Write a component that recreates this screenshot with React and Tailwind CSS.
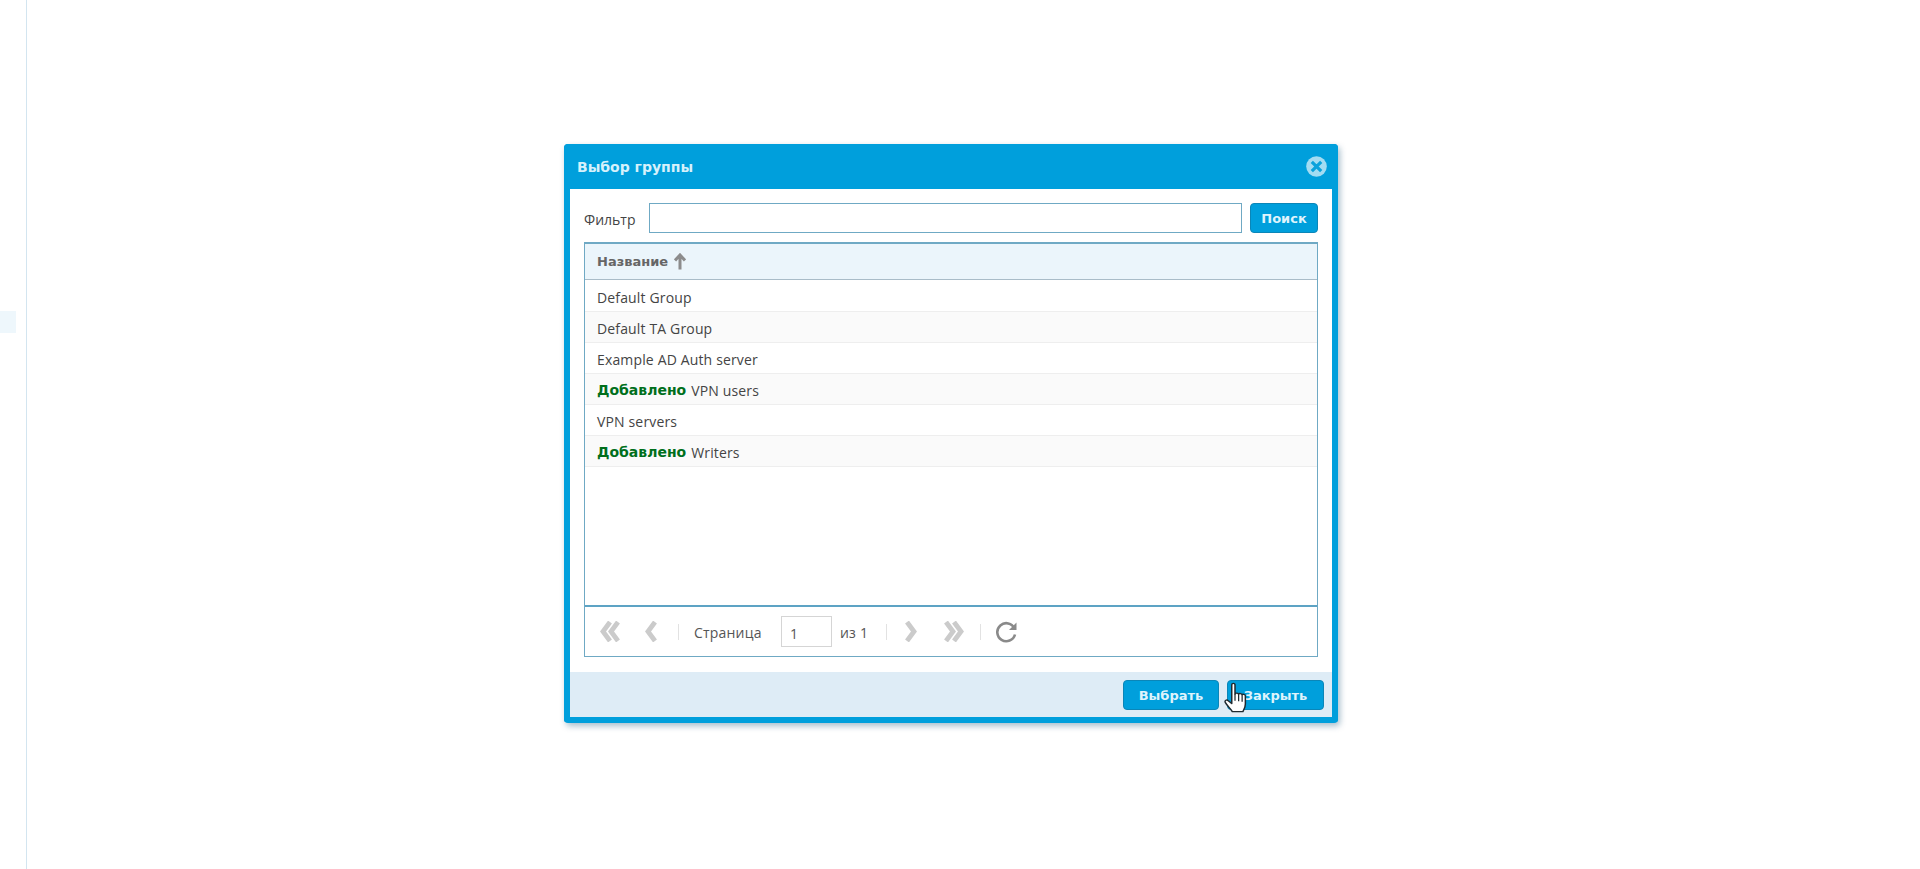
import React from 'react';

const FONT = "font-['Open_Sans','Noto_Sans',sans-serif]";

const rows = [
  { name: 'Default Group' },
  { name: 'Default TA Group' },
  { name: 'Example AD Auth server' },
  { name: 'VPN users', added: true },
  { name: 'VPN servers' },
  { name: 'Writers', added: true },
];

const Chevrons = ({ dir = 'left', double = false }) => {
  const w = double ? 21 : 13;
  const flip = dir === 'right' ? `scale(-1 1) translate(-${w} 0)` : undefined;
  return (
    <svg width={w} height="21" viewBox={`0 0 ${w} 21`} className="shrink-0" aria-hidden>
      <g transform={flip} fill="none" stroke="#cbcbcb" strokeWidth="4.8">
        <path d="M11 1 L4 10.500 L11 20" />
        {double && <path d="M19 1 L12 10.500 L19 20" />}
      </g>
    </svg>
  );
};

const Sep = () => <div className="h-4 w-px shrink-0 bg-[#e2e2e2]" />;

const BlueButton = ({ children, className = '' }) => (
  <button
    type="button"
    className={`h-[30px] rounded-[4px] border border-[#0b86b8] bg-[#009fdc] pt-px text-[13px] font-bold text-[#dff4fc] font-['DejaVu_Sans',sans-serif] ${className}`}
  >
    {children}
  </button>
);

const HandCursor = () => (
  <svg width="30" height="33" viewBox="0 0 24 30" preserveAspectRatio="none" className="absolute left-[-4px] top-[2px]" aria-hidden>
    <path
      d="M7 2.5c0-1.6 2.6-1.6 2.6 0V11c.3-1.3 2.7-1.3 2.9 .3 .3-1.2 2.6-1.1 2.8 .5 .4-1 2.5-.8 2.6 .8V20c0 3-1.3 5-2 7H7.5C6.5 24.500 3.500 22 1.800 18.500c-.8-1.700 1.200-2.900 2.400-1.500L7 19.500Z"
      fill="#ffffff"
      stroke="#1f2a30"
      strokeWidth="1.200"
      strokeLinejoin="round"
    />
    <path d="M9.600 11v6M12.500 11.500v6M15.300 12v6" stroke="#1f2a30" strokeWidth="1" fill="none" />
  </svg>
);

export default function App() {
  return (
    <div className={`flex h-[869px] w-full overflow-hidden bg-white ${FONT}`}>
      {/* left nav remnant */}
      <aside className="h-full w-[27px] shrink-0 border-r border-[#d3e5f0] pt-[311px]">
        <div className="h-[22px] w-4 bg-[#eef7fc]" />
      </aside>

      <main className="flex-1 pl-[537px] pt-[144px]">
        <div className="flex h-[579px] w-[774px] flex-col rounded-[4px] border-x-[6px] border-b-[6px] border-[#009fdc] bg-white shadow-[2px_3px_6px_rgba(0,70,110,0.35)]">
          <header className="-mx-[6px] flex h-[45px] shrink-0 items-center justify-between rounded-t-[4px] bg-[#009fdc] pl-[13px] pr-[11px]">
            <h1 className="pt-px text-[14px] font-bold text-[#d6f1fb] font-['DejaVu_Sans',sans-serif]">Выбор группы</h1>
            <svg width="21" height="21" viewBox="0 0 21 21" aria-hidden>
              <circle cx="10.500" cy="10.500" r="10.300" fill="#a3dcf2" />
              <path d="M5.800 5.800 L15.200 15.200 M15.200 5.800 L5.800 15.200" stroke="#0aa2dc" strokeWidth="3.200" />
            </svg>
          </header>

          <div className="flex min-h-0 flex-1 flex-col px-[14px] pt-[14px]">
            <div className="flex h-[30px] shrink-0 items-center">
              <label className="w-[65px] pt-[2px] text-[14px] text-[#444]">Фильтр</label>
              <input className="h-full w-[593px] border border-[#6fa9c4] bg-white outline-none" />
              <BlueButton className="ml-2 w-[68px]">Поиск</BlueButton>
            </div>

            <div className="mt-[9px] flex h-[415px] shrink-0 flex-col border border-t-2 border-[#6fa9c4]">
              <div className="flex h-[36px] shrink-0 items-center gap-[6px] border-b border-[#a9bcc8] bg-[#ebf5fb] pl-3">
                <span className="text-[13px] font-bold text-[#666] font-['DejaVu_Sans',sans-serif]">Название</span>
                <svg width="12" height="17" viewBox="0 0 12 17" aria-hidden>
                  <path d="M6 16.500V3M1 7.500 L6 2 L11 7.500" fill="none" stroke="#8c8c8c" strokeWidth="3" />
                </svg>
              </div>

              <div className="min-h-0 flex-1 pt-px">
                {rows.map((row, i) => (
                  <div
                    key={row.name}
                    className={`flex h-[31px] items-center gap-[5px] border-b border-[#eeeeee] pl-3 pt-[2px] text-[14px] tracking-[0.15px] text-[#444] ${i % 2 === 1 ? 'bg-[#fafafa]' : 'bg-white'}`}
                  >
                    {row.added && <b className="font-bold tracking-normal text-[#006f1c] font-['DejaVu_Sans',sans-serif] text-[14px]">Добавлено</b>}
                    <span>{row.name}</span>
                  </div>
                ))}
              </div>

              <div className="flex h-[51px] shrink-0 items-center border-t-2 border-[#5da3c4] pl-[14px] text-[14px] text-[#555]">
                <Chevrons double />
                <div className="ml-[24px]"><Chevrons /></div>
                <div className="ml-[21px]"><Sep /></div>
                <span className="ml-[15px] w-[68px] whitespace-nowrap pt-px tracking-[0.2px]">Страница</span>
                <div className="ml-[19px] flex h-[31px] w-[51px] items-center border border-[#d5d5d5] pl-2 pt-[3px]">1</div>
                <span className="ml-2 w-[28px] whitespace-nowrap pt-px tracking-[0.2px]">из 1</span>
                <div className="ml-[18px]"><Sep /></div>
                <div className="ml-[18px]"><Chevrons dir="right" /></div>
                <div className="ml-[26px]"><Chevrons dir="right" double /></div>
                <div className="ml-[15px]"><Sep /></div>
                <svg width="23" height="23" viewBox="0 0 23 23" className="ml-[14px] shrink-0" aria-hidden>
                  <path d="M19.500 8.500 A9 9 0 1 0 20 14.500" fill="none" stroke="#8a8a8a" strokeWidth="2.600" />
                  <path d="M21.500 2.500 V10 H14 Z" fill="#8a8a8a" />
                </svg>
              </div>
            </div>

            <div className="h-[15px] shrink-0" />
          </div>

          <footer className="flex h-[45px] shrink-0 items-center justify-end gap-2 bg-[#deecf6] pr-2 pt-[1px]">
            <BlueButton className="w-[96px]">Выбрать</BlueButton>
            <div className="relative">
              <BlueButton className="w-[97px]">Закрыть</BlueButton>
              <HandCursor />
            </div>
          </footer>
        </div>
      </main>
    </div>
  );
}
